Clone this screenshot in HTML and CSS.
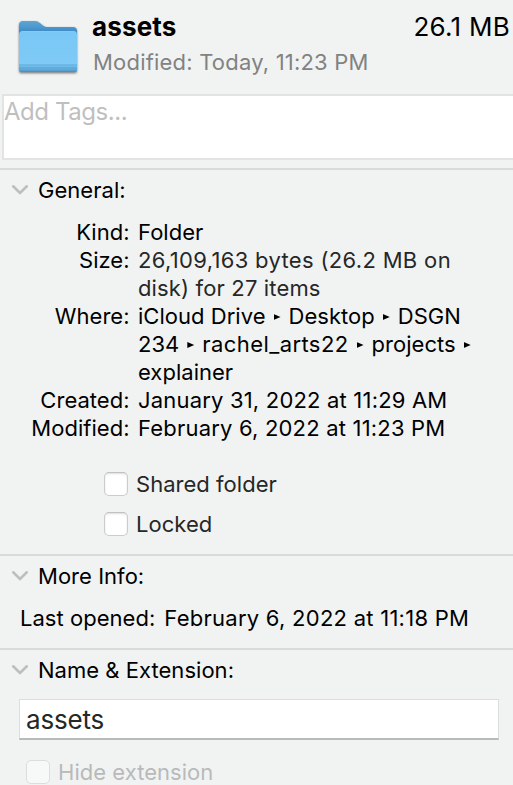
FILE: index.html
```html
<!DOCTYPE html>
<html lang="en">
<head>
<meta charset="utf-8">
<title>assets Info</title>
<link rel="stylesheet" href="styles.css">
</head>
<body>
<main class="panel">
  <header class="summary">
    <svg class="folder" width="68" height="64" viewBox="0 0 68 64" aria-hidden="true">
      <defs>
        <linearGradient id="back" x1="0" y1="0" x2="0" y2="1">
          <stop offset="0" stop-color="#5fa5d2"/><stop offset=".13" stop-color="#4b97cb"/><stop offset=".24" stop-color="#3485c6"/><stop offset="1" stop-color="#3485c6"/>
        </linearGradient>
        <linearGradient id="front" x1="0" y1="0" x2="0" y2="1">
          <stop offset="0" stop-color="#85cdf8"/><stop offset=".04" stop-color="#79c7f5"/><stop offset=".81" stop-color="#7fcaf6"/><stop offset=".82" stop-color="#64b1e0"/><stop offset=".86" stop-color="#72bdea"/><stop offset=".89" stop-color="#60acdb"/><stop offset=".95" stop-color="#5da8d8"/><stop offset="1" stop-color="#4789b6"/>
        </linearGradient>
        <filter id="shade" x="-10%" y="-10%" width="120%" height="125%"><feDropShadow dx="0" dy="1.3" stdDeviation=".8" flood-color="#303a42" flood-opacity=".65"/></filter>
      </defs>
      <g filter="url(#shade)">
        <path fill="url(#back)" d="M5 9Q5 5 9 5H21Q24 5 26 7L29 9.500Q31 11 34 11H59Q63 11 63 15V53Q63 56 60 56H8Q5 56 5 53Z"/>
        <path fill="url(#front)" d="M5 18.500Q5 15 8.500 15H59.500Q63 15 63 18.500V53Q63 56 60 56H8Q5 56 5 53Z"/>
      </g>
    </svg>
    <div class="heading">
      <div class="title-row"><h1 class="name">assets</h1><span class="total">26.1 MB</span></div>
      <p class="changed">Modified: Today, 11:23 PM</p>
    </div>
  </header>
  <div class="tags"><span class="tags-hint">Add Tags...</span></div>

  <section class="section general">
    <h2 class="section-title"><svg class="chevron" width="18" height="12" viewBox="0 0 18 12"><path d="M2.200 2.300 9 9 15.800 2.300"/></svg><span>General:</span></h2>
    <dl class="facts">
      <dt>Kind:</dt><dd>Folder</dd>
      <dt>Size:</dt><dd class="soft"><span class="wide">26,109,163 bytes (26.2 MB on</span><br><span>disk) for 27 items</span></dd>
      <dt>Where:</dt><dd>iCloud Drive<i class="sep"></i>Desktop<i class="sep"></i>DSGN<br>234<i class="sep"></i><span class="widest">rachel_arts22</span><i class="sep"></i>projects<i class="sep"></i><br>explainer</dd>
      <dt>Created:</dt><dd class="roomy">January 31, 2022 at 11:29 AM</dd>
      <dt>Modified:</dt><dd class="roomy">February 6, 2022 at 11:23 PM</dd>
    </dl>
    <div class="options">
      <label class="option"><i class="box"></i><span>Shared folder</span></label>
      <label class="option"><i class="box"></i><span>Locked</span></label>
    </div>
  </section>

  <section class="section more">
    <h2 class="section-title"><svg class="chevron" width="18" height="12" viewBox="0 0 18 12"><path d="M2.200 2.300 9 9 15.800 2.300"/></svg><span>More Info:</span></h2>
    <p class="opened"><span>Last opened:</span><span class="opened-date">February 6, 2022 at 11:18 PM</span></p>
  </section>

  <section class="section naming">
    <h2 class="section-title"><svg class="chevron" width="18" height="12" viewBox="0 0 18 12"><path d="M2.200 2.300 9 9 15.800 2.300"/></svg><span>Name &amp; Extension:</span></h2>
    <div class="field"><span>assets</span></div>
    <label class="option disabled"><i class="box"></i><span>Hide extension</span></label>
  </section>
</main>
</body>
</html>
```
FILE: styles.css
```css
* { box-sizing: border-box; }
html, body { margin: 0; height: 785px; overflow: hidden; }
body { background: #f1f3f3; color: #000; font: 22px/28px Inter, sans-serif; letter-spacing: .03px; white-space: nowrap; }
h1, h2, p, dl, dd { margin: 0; font-weight: 400; }

.summary { display: flex; height: 94px; padding-top: 16px; }
.folder { margin-left: 14px; flex: none; }
.heading { flex: 1; margin-left: 10px; }
.title-row { display: flex; justify-content: space-between; height: 32px; line-height: 22px; font-size: 26px; padding-right: 3px; }
.name { font-size: 26px; font-weight: 700; letter-spacing: .15px; }
.total { letter-spacing: .25px; }
.changed { margin-left: 1px; color: #818282; letter-spacing: .2px; }

.tags { height: 66px; margin-left: 2px; margin-right: -2px; border: 2px solid #e2e3e3; background: #fff; }
.tags-hint { display: block; color: #bfbfbf; font-size: 24px; line-height: 32px; letter-spacing: -.45px; }

.section { border-top: 2px solid #d9dbdb; }
.section-title { display: flex; align-items: center; height: 40px; padding-left: 11px; font-size: 22px; }
.chevron { margin-right: 9px; fill: none; stroke: #bdbebe; stroke-width: 2.6; stroke-linecap: round; stroke-linejoin: round; }
.general { margin-top: 8px; height: 386px; }
.more { height: 94px; }

.facts { display: grid; grid-template-columns: 129.6px 1fr; column-gap: 8.4px; margin-top: 8px; }
.facts dt { text-align: right; }
.soft { color: #262727; letter-spacing: .15px; }
.roomy { letter-spacing: .19px; }
.wide { letter-spacing: .33px; }
.widest { letter-spacing: .42px; }
.sep { display: inline-block; width: 7px; height: 6px; margin: 0 8px 2px; vertical-align: middle; background: #000; clip-path: polygon(0 0, 100% 50%, 0 100%); }

.options { margin: 22px 0 0 104px; }
.option { display: flex; align-items: center; gap: 8px; height: 40px; color: #262727; }
.box { width: 24px; height: 24px; border: 1px solid #cbcccc; border-top-color: #bfc0c0; border-radius: 5px; background: #fff; box-shadow: inset 0 1px 2px #ddd; }
.opened { display: flex; gap: 9px; padding: 8px 0 0 20px; }
.opened-date { letter-spacing: .26px; }
.field { width: 480px; height: 41px; margin: 9px 0 0 19px; padding-left: 6px; border: 1px solid #dcdede; border-bottom: 2px solid #b8baba; background: #fff; color: #262727; font-size: 26px; line-height: 39px; letter-spacing: -.2px; }
.disabled { margin: 12px 0 0 26px; color: #b8baba; }
.disabled .box { background: #f7f9f8; border-color: #dcdede; box-shadow: none; }
```
